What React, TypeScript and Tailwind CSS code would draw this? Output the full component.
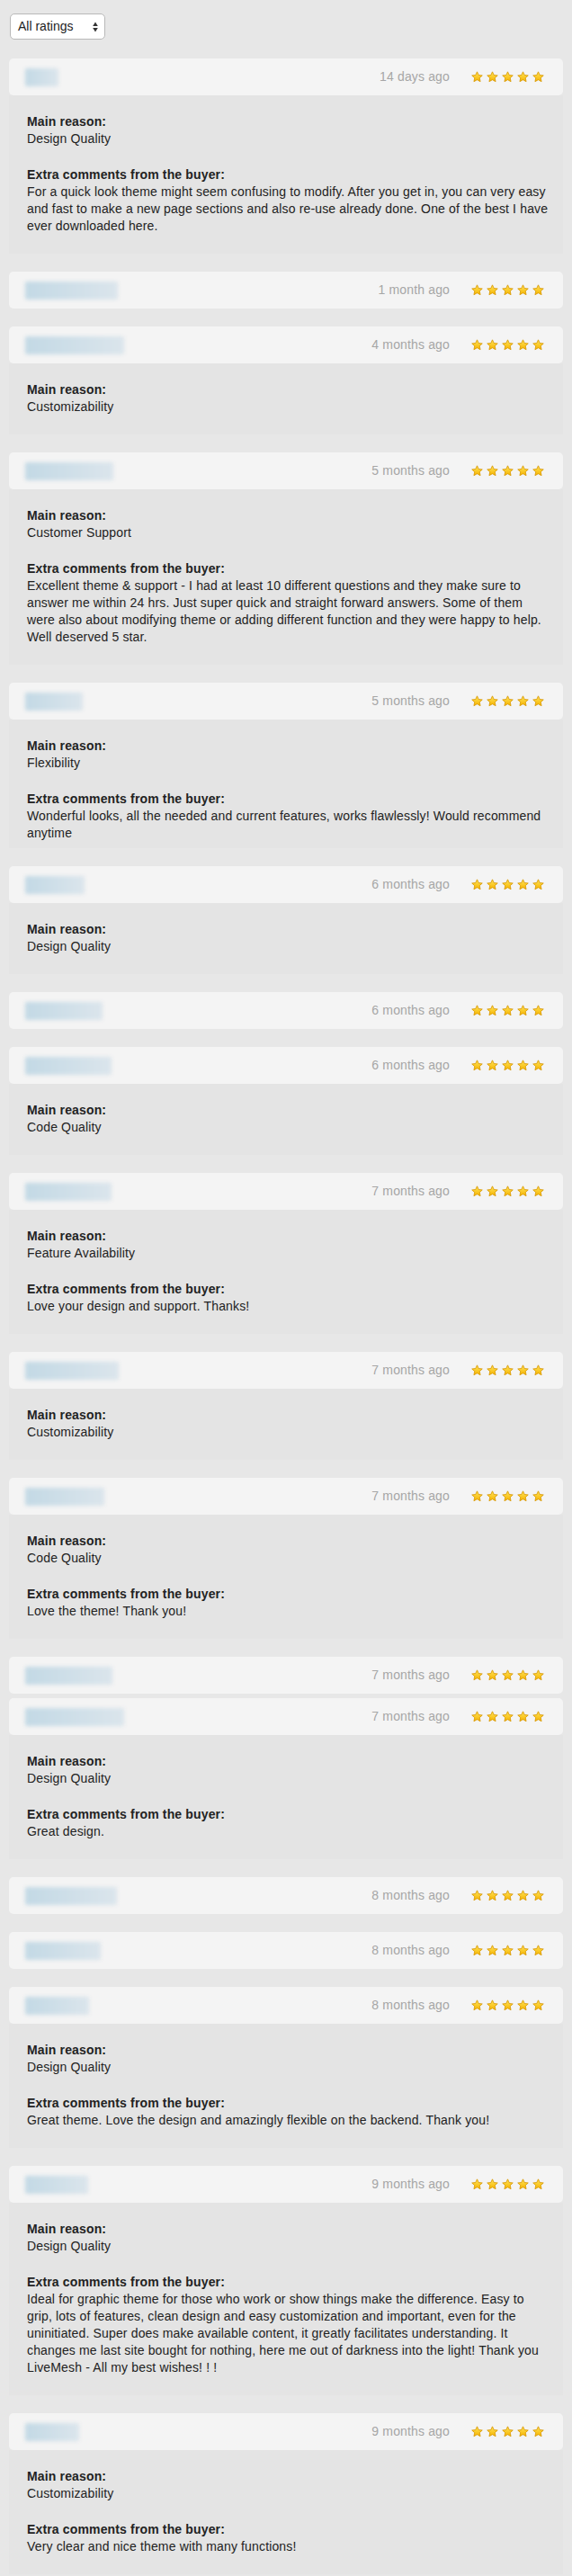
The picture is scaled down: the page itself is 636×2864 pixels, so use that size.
const reviews = [
  {
    name: 37,
    date: "14 days ago",
    reason: "Design Quality",
    comment: [
      "For a quick look theme might seem confusing to modify. After you get in, you can very easy",
      "and fast to make a new page sections and also re-use already done. One of the best I have",
      "ever downloaded here.",
    ],
  },
  { name: 103, date: "1 month ago" },
  { name: 110, date: "4 months ago", reason: "Customizability" },
  {
    name: 98,
    date: "5 months ago",
    reason: "Customer Support",
    comment: [
      "Excellent theme & support - I had at least 10 different questions and they make sure to",
      "answer me within 24 hrs. Just super quick and straight forward answers. Some of them",
      "were also about modifying theme or adding different function and they were happy to help.",
      "Well deserved 5 star.",
    ],
  },
  {
    name: 64,
    date: "5 months ago",
    reason: "Flexibility",
    comment: [
      "Wonderful looks, all the needed and current features, works flawlessly! Would recommend",
      "anytime",
    ],
    short: true,
  },
  { name: 66, date: "6 months ago", reason: "Design Quality" },
  { name: 86, date: "6 months ago" },
  { name: 96, date: "6 months ago", reason: "Code Quality" },
  {
    name: 96,
    date: "7 months ago",
    reason: "Feature Availability",
    comment: ["Love your design and support. Thanks!"],
  },
  { name: 104, date: "7 months ago", reason: "Customizability" },
  {
    name: 88,
    date: "7 months ago",
    reason: "Code Quality",
    comment: ["Love the theme! Thank you!"],
  },
  { name: 97, date: "7 months ago", tight: true },
  {
    name: 110,
    date: "7 months ago",
    reason: "Design Quality",
    comment: ["Great design."],
  },
  { name: 102, date: "8 months ago" },
  { name: 84, date: "8 months ago" },
  {
    name: 71,
    date: "8 months ago",
    reason: "Design Quality",
    comment: ["Great theme. Love the design and amazingly flexible on the backend. Thank you!"],
  },
  {
    name: 70,
    date: "9 months ago",
    reason: "Design Quality",
    comment: [
      "Ideal for graphic theme for those who work or show things make the difference. Easy to",
      "grip, lots of features, clean design and easy customization and important, even for the",
      "uninitiated. Super does make available content, it greatly facilitates understanding. It",
      "changes me last site bought for nothing, here me out of darkness into the light! Thank you",
      "LiveMesh - All my best wishes! ! !",
    ],
  },
  {
    name: 60,
    date: "9 months ago",
    reason: "Customizability",
    comment: ["Very clear and nice theme with many functions!"],
  },
];

type Review = {
  name: number;
  date: string;
  reason?: string;
  comment?: string[];
  tight?: boolean;
  short?: boolean;
};

function Star() {
  return (
    <svg viewBox="0 0 14 14" className="h-[13px] w-[13px]">
      <defs>
        <linearGradient id="starFill" x1="0" y1="0" x2="0" y2="1">
          <stop offset="0" stopColor="#ffe45a" />
          <stop offset="1" stopColor="#f6b400" />
        </linearGradient>
      </defs>
      <path
        d="M7 0.9 L8.85 4.85 L13.2 5.35 L9.95 8.25 L10.85 12.6 L7 10.4 L3.15 12.6 L4.05 8.25 L0.8 5.35 L5.15 4.85 Z"
        fill="url(#starFill)"
        stroke="#d79600"
        strokeWidth="0.9"
        strokeLinejoin="round"
      />
    </svg>
  );
}

function ReviewCard({ review }: { review: Review }) {
  return (
    <div className={review.tight ? "mb-[5px]" : "mb-5"}>
      <div className="flex h-[41px] items-center rounded-[5px] bg-[#f4f4f4] pl-[18px] pr-[21px]">
        <div
          className="h-[20px] rounded-[2px] bg-gradient-to-r from-[#c3d9e5] to-[#dbe5ec] blur-[2px]"
          style={{ width: review.name }}
        />
        <span className="ml-auto text-[14px] tracking-[0.15px] text-[#a6a6a6]">{review.date}</span>
        <div className="ml-[24px] flex gap-[4px]">
          {[0, 1, 2, 3, 4].map((i) => (
            <Star key={i} />
          ))}
        </div>
      </div>
      {review.reason && (
        <div
          className={`bg-[#e4e4e4] px-5 pt-5 text-[14px] leading-[19px] tracking-[0.15px] text-[#222] ${
            review.short ? "pb-[7px]" : "pb-[21px]"
          }`}
        >
          <div className="font-bold">Main reason:</div>
          <div>{review.reason}</div>
          {review.comment && (
            <>
              <div className="mt-[21px] font-bold">Extra comments from the buyer:</div>
              <p>
                {review.comment.map((line, i) => (
                  <span key={i} className="block whitespace-nowrap">
                    {line}
                  </span>
                ))}
              </p>
            </>
          )}
        </div>
      )}
    </div>
  );
}

export default function App() {
  return (
    <div className="min-h-[2864px] bg-[#e7e7e7] px-[10px] pt-[15px] [font-family:'Liberation_Sans',Arial,sans-serif]">
      <div className="ml-[1px] flex h-[29px] w-[106px] items-center rounded-[5px] border border-[#b9b9b9] bg-white pl-[8px] pr-[7px] text-[14px] text-[#222]">
        <span>All ratings</span>
        <svg viewBox="0 0 6 12" className="ml-auto h-[12px] w-[6px]">
          <path d="M3 0.5 L5.8 5 L0.2 5 Z" fill="#333" />
          <path d="M3 11.5 L5.8 7 L0.2 7 Z" fill="#333" />
        </svg>
      </div>
      <div className="mt-[21px]">
        {reviews.map((r, i) => (
          <ReviewCard key={i} review={r} />
        ))}
      </div>
    </div>
  );
}
